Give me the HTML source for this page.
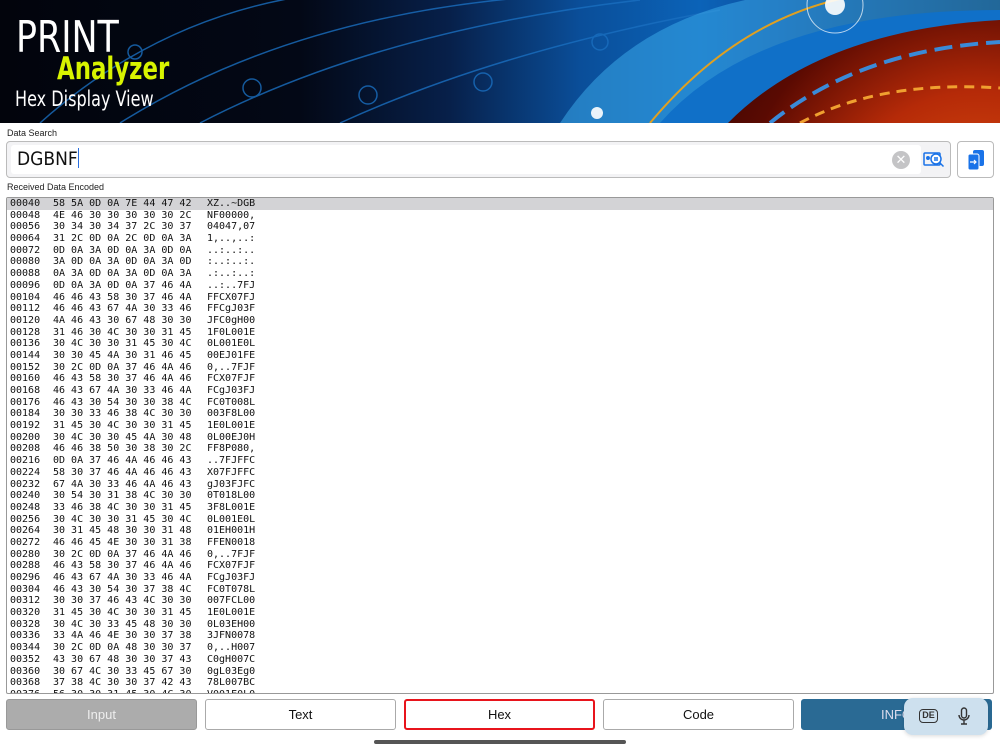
<!DOCTYPE html>
<html><head><meta charset="utf-8"><style>
*{margin:0;padding:0;box-sizing:border-box}
body{width:1000px;height:750px;overflow:hidden;background:#fff;font-family:"Liberation Sans",sans-serif;position:relative}
#hdr{position:absolute;left:0;top:0;width:1000px;height:123px;overflow:hidden;
background:linear-gradient(90deg,#02040c 0%,#030816 30%,#07204a 45%,#0a4e99 58%,#0b63b8 70%,#0d4f9e 78%,#061a3a 100%)}
#hdr .t1{position:absolute;left:16px;top:16px;color:#fff;font-size:44px;font-family:"DejaVu Sans Condensed","Liberation Sans Narrow",sans-serif;line-height:44px;transform:scaleX(0.88);transform-origin:left top}
#hdr .t2{position:absolute;left:57px;top:53px;color:#d8f400;font-size:31px;font-family:"DejaVu Sans Condensed",sans-serif;font-weight:bold;line-height:32px;transform:scaleX(0.82);transform-origin:left top}
#hdr .t3{position:absolute;left:15px;top:87px;color:#fff;font-size:21px;font-family:"DejaVu Sans Condensed",sans-serif;line-height:24px;transform:scaleX(0.85);transform-origin:left top}
.lbl{position:absolute;left:7px;font-size:9px;color:#222}
#search{position:absolute;left:6px;top:141px;width:945px;height:37px;border:1px solid #bbb;border-radius:4px;background:#f3f3f5}
#search .in{position:absolute;left:4px;top:3px;width:910px;height:29px;background:#fff;border-radius:3px;font-size:19px;font-family:"DejaVu Sans Condensed",sans-serif;padding:3px 6px;color:#111}
#list{position:absolute;left:6px;top:197px;width:988px;height:497px;border:1px solid #999;border-radius:2px;overflow:hidden}
.r{position:relative;height:11.7px;font-family:"DejaVu Sans Mono","Liberation Mono",monospace;font-size:10px;line-height:11.7px;color:#111;white-space:pre}
.r span{position:absolute;top:0}
.r .a{left:3px}.r .b{left:46px}.r .c{left:200px}
.r.h{background:#d3d3d6}
.btn{position:absolute;top:699px;height:31px;width:191px;border:1px solid #aaa;border-radius:3px;background:#fff;text-align:center;line-height:29px;font-size:13px;color:#111}
</style></head><body>
<div id="hdr">
<svg width="1000" height="123" style="position:absolute;left:0;top:0">
<defs><radialGradient id="rg" cx="980" cy="240" r="330" gradientUnits="userSpaceOnUse">
<stop offset="0" stop-color="#e85a10"/><stop offset="0.45" stop-color="#b52a08"/><stop offset="0.75" stop-color="#5a0a02"/><stop offset="1" stop-color="#3a0500"/></radialGradient></defs>
<g fill="none" stroke="#1a6fc0" stroke-width="1.5" opacity="0.8">
<path d="M40 123 Q200 -20 420 -10"/><path d="M120 123 Q300 10 560 -5"/><path d="M200 123 Q380 30 640 0"/><path d="M340 123 Q500 50 720 10"/>
<circle cx="252" cy="88" r="9"/><circle cx="368" cy="95" r="9"/><circle cx="483" cy="82" r="9"/><circle cx="600" cy="42" r="8"/><circle cx="135" cy="52" r="7"/>
</g>
<path d="M560 123 Q640 0 820 -10 L1000 -10 L1000 123 Z" fill="#3aa8e8" opacity="0.55"/>
<path d="M660 123 Q760 10 1000 10 L1000 123 Z" fill="#1070c8"/>
<path d="M728 123 Q820 30 1000 20 L1000 123 Z" fill="url(#rg)"/>
<path d="M650 123 Q740 15 860 -5" fill="none" stroke="#e0a020" stroke-width="2"/>
<path d="M770 123 Q860 50 1000 42" fill="none" stroke="#3a8ad8" stroke-width="4" stroke-dasharray="18 8"/>
<path d="M800 123 Q880 80 1000 88" fill="none" stroke="#f0a030" stroke-width="3" stroke-dasharray="10 7"/>
<circle cx="835" cy="5" r="28" fill="none" stroke="#fff" stroke-width="1" opacity="0.7"/>
<circle cx="835" cy="5" r="10" fill="#fff" opacity="0.9"/>
<circle cx="597" cy="113" r="6" fill="#fff" opacity="0.9"/>
</svg>
<div class="t1">PRINT</div><div class="t2">Analyzer</div><div class="t3">Hex Display View</div>
</div>
<div class="lbl" style="top:128px">Data Search</div>
<div id="search"><div class="in">DGBNF<span style="display:inline-block;width:1px;height:20px;background:#2a6fe0;vertical-align:-3px"></span></div>
<div style="position:absolute;left:885px;top:9px;width:18px;height:18px;border-radius:50%;background:#c4c4c6;color:#fff;font-size:13px;line-height:18px;text-align:center">✕</div>
<svg style="position:absolute;left:916px;top:8px" width="24" height="20" viewBox="0 0 24 20" fill="none" stroke="#1a73e8" stroke-width="1.5"><rect x="1" y="3" width="16" height="12" rx="1"/><circle cx="5" cy="8" r="1.2" fill="#1a73e8"/><circle cx="13" cy="9" r="5" fill="#fff"/><path d="M11 8h4M11 10h4M16.5 12.5l4 4"/></svg>
</div>
<div style="position:absolute;left:957px;top:141px;width:37px;height:37px;border:1px solid #bbb;border-radius:4px;background:#fff">
<svg style="position:absolute;left:9px;top:7px" width="18" height="22" viewBox="0 0 18 22"><rect x="6" y="1" width="11" height="16" rx="2" fill="#1a73e8"/><rect x="1" y="5" width="11" height="16" rx="2" fill="#1a73e8" stroke="#fff" stroke-width="1"/><path d="M3 13h6M7 11l2 2-2 2" stroke="#fff" stroke-width="1.2" fill="none"/></svg></div>
<div class="lbl" style="top:182px">Received Data Encoded</div>
<div id="list">
<div class="r h"><span class="a">00040</span><span class="b">58 5A 0D 0A 7E 44 47 42</span><span class="c">XZ..~DGB</span></div>
<div class="r"><span class="a">00048</span><span class="b">4E 46 30 30 30 30 30 2C</span><span class="c">NF00000,</span></div>
<div class="r"><span class="a">00056</span><span class="b">30 34 30 34 37 2C 30 37</span><span class="c">04047,07</span></div>
<div class="r"><span class="a">00064</span><span class="b">31 2C 0D 0A 2C 0D 0A 3A</span><span class="c">1,..,..:</span></div>
<div class="r"><span class="a">00072</span><span class="b">0D 0A 3A 0D 0A 3A 0D 0A</span><span class="c">..:..:..</span></div>
<div class="r"><span class="a">00080</span><span class="b">3A 0D 0A 3A 0D 0A 3A 0D</span><span class="c">:..:..:.</span></div>
<div class="r"><span class="a">00088</span><span class="b">0A 3A 0D 0A 3A 0D 0A 3A</span><span class="c">.:..:..:</span></div>
<div class="r"><span class="a">00096</span><span class="b">0D 0A 3A 0D 0A 37 46 4A</span><span class="c">..:..7FJ</span></div>
<div class="r"><span class="a">00104</span><span class="b">46 46 43 58 30 37 46 4A</span><span class="c">FFCX07FJ</span></div>
<div class="r"><span class="a">00112</span><span class="b">46 46 43 67 4A 30 33 46</span><span class="c">FFCgJ03F</span></div>
<div class="r"><span class="a">00120</span><span class="b">4A 46 43 30 67 48 30 30</span><span class="c">JFC0gH00</span></div>
<div class="r"><span class="a">00128</span><span class="b">31 46 30 4C 30 30 31 45</span><span class="c">1F0L001E</span></div>
<div class="r"><span class="a">00136</span><span class="b">30 4C 30 30 31 45 30 4C</span><span class="c">0L001E0L</span></div>
<div class="r"><span class="a">00144</span><span class="b">30 30 45 4A 30 31 46 45</span><span class="c">00EJ01FE</span></div>
<div class="r"><span class="a">00152</span><span class="b">30 2C 0D 0A 37 46 4A 46</span><span class="c">0,..7FJF</span></div>
<div class="r"><span class="a">00160</span><span class="b">46 43 58 30 37 46 4A 46</span><span class="c">FCX07FJF</span></div>
<div class="r"><span class="a">00168</span><span class="b">46 43 67 4A 30 33 46 4A</span><span class="c">FCgJ03FJ</span></div>
<div class="r"><span class="a">00176</span><span class="b">46 43 30 54 30 30 38 4C</span><span class="c">FC0T008L</span></div>
<div class="r"><span class="a">00184</span><span class="b">30 30 33 46 38 4C 30 30</span><span class="c">003F8L00</span></div>
<div class="r"><span class="a">00192</span><span class="b">31 45 30 4C 30 30 31 45</span><span class="c">1E0L001E</span></div>
<div class="r"><span class="a">00200</span><span class="b">30 4C 30 30 45 4A 30 48</span><span class="c">0L00EJ0H</span></div>
<div class="r"><span class="a">00208</span><span class="b">46 46 38 50 30 38 30 2C</span><span class="c">FF8P080,</span></div>
<div class="r"><span class="a">00216</span><span class="b">0D 0A 37 46 4A 46 46 43</span><span class="c">..7FJFFC</span></div>
<div class="r"><span class="a">00224</span><span class="b">58 30 37 46 4A 46 46 43</span><span class="c">X07FJFFC</span></div>
<div class="r"><span class="a">00232</span><span class="b">67 4A 30 33 46 4A 46 43</span><span class="c">gJ03FJFC</span></div>
<div class="r"><span class="a">00240</span><span class="b">30 54 30 31 38 4C 30 30</span><span class="c">0T018L00</span></div>
<div class="r"><span class="a">00248</span><span class="b">33 46 38 4C 30 30 31 45</span><span class="c">3F8L001E</span></div>
<div class="r"><span class="a">00256</span><span class="b">30 4C 30 30 31 45 30 4C</span><span class="c">0L001E0L</span></div>
<div class="r"><span class="a">00264</span><span class="b">30 31 45 48 30 30 31 48</span><span class="c">01EH001H</span></div>
<div class="r"><span class="a">00272</span><span class="b">46 46 45 4E 30 30 31 38</span><span class="c">FFEN0018</span></div>
<div class="r"><span class="a">00280</span><span class="b">30 2C 0D 0A 37 46 4A 46</span><span class="c">0,..7FJF</span></div>
<div class="r"><span class="a">00288</span><span class="b">46 43 58 30 37 46 4A 46</span><span class="c">FCX07FJF</span></div>
<div class="r"><span class="a">00296</span><span class="b">46 43 67 4A 30 33 46 4A</span><span class="c">FCgJ03FJ</span></div>
<div class="r"><span class="a">00304</span><span class="b">46 43 30 54 30 37 38 4C</span><span class="c">FC0T078L</span></div>
<div class="r"><span class="a">00312</span><span class="b">30 30 37 46 43 4C 30 30</span><span class="c">007FCL00</span></div>
<div class="r"><span class="a">00320</span><span class="b">31 45 30 4C 30 30 31 45</span><span class="c">1E0L001E</span></div>
<div class="r"><span class="a">00328</span><span class="b">30 4C 30 33 45 48 30 30</span><span class="c">0L03EH00</span></div>
<div class="r"><span class="a">00336</span><span class="b">33 4A 46 4E 30 30 37 38</span><span class="c">3JFN0078</span></div>
<div class="r"><span class="a">00344</span><span class="b">30 2C 0D 0A 48 30 30 37</span><span class="c">0,..H007</span></div>
<div class="r"><span class="a">00352</span><span class="b">43 30 67 48 30 30 37 43</span><span class="c">C0gH007C</span></div>
<div class="r"><span class="a">00360</span><span class="b">30 67 4C 30 33 45 67 30</span><span class="c">0gL03Eg0</span></div>
<div class="r"><span class="a">00368</span><span class="b">37 38 4C 30 30 37 42 43</span><span class="c">78L007BC</span></div>
<div class="r"><span class="a">00376</span><span class="b">56 30 30 31 45 30 4C 30</span><span class="c">V001E0L0</span></div>
</div>
<div class="btn" style="left:6px;background:#acacac;color:#eee;border-color:#999">Input</div>
<div class="btn" style="left:205px">Text</div>
<div class="btn" style="left:404px;border:2px solid #e8141c;line-height:27px">Hex</div>
<div class="btn" style="left:603px">Code</div>
<div class="btn" style="left:801px;background:#2a6a94;border-color:#2a6a94;color:#dde">INFO</div>
<div style="position:absolute;left:904px;top:698px;width:84px;height:37px;border-radius:9px;background:#cde0ee;box-shadow:0 1px 4px rgba(0,0,0,.15)">
<div style="position:absolute;left:15px;top:11px;width:19px;height:14px;border:1.5px solid #333;border-radius:4px;font-size:9px;font-weight:bold;line-height:11px;text-align:center;color:#333">DE</div>
<svg style="position:absolute;left:54px;top:9px" width="12" height="18" viewBox="0 0 12 18" fill="none" stroke="#333" stroke-width="1.4"><rect x="3.5" y="1" width="5" height="10" rx="2.5"/><path d="M1 8a5 5 0 0 0 10 0M6 13v4M3 17h6"/></svg>
</div>
<div style="position:absolute;left:374px;top:740px;width:252px;height:4px;border-radius:2px;background:#555"></div>
</body></html>
